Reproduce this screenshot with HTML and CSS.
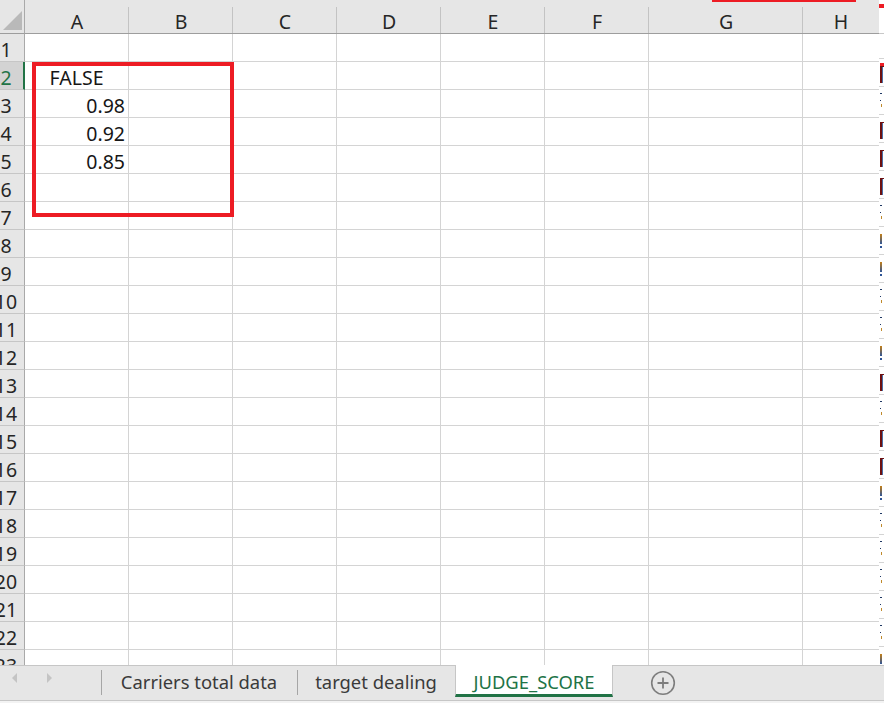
FILE: index.html
```html
<!DOCTYPE html>
<html>
<head>
<meta charset="utf-8">
<link rel="stylesheet" href="styles.css">
</head>
<body>
<div class="app">
  <div class="sheet">
    <div class="corner"><svg width="25" height="34" viewBox="0 0 25 34"><polygon points="22,11 22,30 3,30" fill="#b9b9b9"/></svg></div>
    <div class="ch">A</div><div class="ch">B</div><div class="ch">C</div><div class="ch">D</div><div class="ch">E</div><div class="ch">F</div><div class="ch">G</div><div class="ch">H</div><div class="ce"></div>

    <div class="rh"><span>1</span></div><div class="c"></div><div class="c"></div><div class="c"></div><div class="c"></div><div class="c"></div><div class="c"></div><div class="c"></div><div class="c"></div><div class="e"></div>
    <div class="rh act"><span>2</span></div><div class="c ctr">FALSE</div><div class="c"></div><div class="c"></div><div class="c"></div><div class="c"></div><div class="c"></div><div class="c"></div><div class="c"></div><div class="e"><i class="mk red top"></i></div>
    <div class="rh"><span>3</span></div><div class="c num">0.98</div><div class="c"></div><div class="c"></div><div class="c"></div><div class="c"></div><div class="c"></div><div class="c"></div><div class="c"></div><div class="e"><i class="mk a"></i></div>
    <div class="rh"><span>4</span></div><div class="c num">0.92</div><div class="c"></div><div class="c"></div><div class="c"></div><div class="c"></div><div class="c"></div><div class="c"></div><div class="c"></div><div class="e"><i class="mk red"></i></div>
    <div class="rh"><span>5</span></div><div class="c num">0.85</div><div class="c"></div><div class="c"></div><div class="c"></div><div class="c"></div><div class="c"></div><div class="c"></div><div class="c"></div><div class="e"><i class="mk red"></i></div>
    <div class="rh"><span>6</span></div><div class="c"></div><div class="c"></div><div class="c"></div><div class="c"></div><div class="c"></div><div class="c"></div><div class="c"></div><div class="c"></div><div class="e"><i class="mk red"></i></div>
    <div class="rh"><span>7</span></div><div class="c"></div><div class="c"></div><div class="c"></div><div class="c"></div><div class="c"></div><div class="c"></div><div class="c"></div><div class="c"></div><div class="e"><i class="mk a"></i></div>
    <div class="rh"><span>8</span></div><div class="c"></div><div class="c"></div><div class="c"></div><div class="c"></div><div class="c"></div><div class="c"></div><div class="c"></div><div class="c"></div><div class="e"><i class="mk ex"></i></div>
    <div class="rh"><span>9</span></div><div class="c"></div><div class="c"></div><div class="c"></div><div class="c"></div><div class="c"></div><div class="c"></div><div class="c"></div><div class="c"></div><div class="e"><i class="mk ex"></i></div>
    <div class="rh"><span>10</span></div><div class="c"></div><div class="c"></div><div class="c"></div><div class="c"></div><div class="c"></div><div class="c"></div><div class="c"></div><div class="c"></div><div class="e"><i class="mk a"></i></div>
    <div class="rh"><span>11</span></div><div class="c"></div><div class="c"></div><div class="c"></div><div class="c"></div><div class="c"></div><div class="c"></div><div class="c"></div><div class="c"></div><div class="e"><i class="mk a"></i></div>
    <div class="rh"><span>12</span></div><div class="c"></div><div class="c"></div><div class="c"></div><div class="c"></div><div class="c"></div><div class="c"></div><div class="c"></div><div class="c"></div><div class="e"><i class="mk ex"></i></div>
    <div class="rh"><span>13</span></div><div class="c"></div><div class="c"></div><div class="c"></div><div class="c"></div><div class="c"></div><div class="c"></div><div class="c"></div><div class="c"></div><div class="e"><i class="mk red"></i></div>
    <div class="rh"><span>14</span></div><div class="c"></div><div class="c"></div><div class="c"></div><div class="c"></div><div class="c"></div><div class="c"></div><div class="c"></div><div class="c"></div><div class="e"><i class="mk a"></i></div>
    <div class="rh"><span>15</span></div><div class="c"></div><div class="c"></div><div class="c"></div><div class="c"></div><div class="c"></div><div class="c"></div><div class="c"></div><div class="c"></div><div class="e"><i class="mk red"></i></div>
    <div class="rh"><span>16</span></div><div class="c"></div><div class="c"></div><div class="c"></div><div class="c"></div><div class="c"></div><div class="c"></div><div class="c"></div><div class="c"></div><div class="e"><i class="mk red"></i></div>
    <div class="rh"><span>17</span></div><div class="c"></div><div class="c"></div><div class="c"></div><div class="c"></div><div class="c"></div><div class="c"></div><div class="c"></div><div class="c"></div><div class="e"><i class="mk ex"></i></div>
    <div class="rh"><span>18</span></div><div class="c"></div><div class="c"></div><div class="c"></div><div class="c"></div><div class="c"></div><div class="c"></div><div class="c"></div><div class="c"></div><div class="e"><i class="mk a"></i></div>
    <div class="rh"><span>19</span></div><div class="c"></div><div class="c"></div><div class="c"></div><div class="c"></div><div class="c"></div><div class="c"></div><div class="c"></div><div class="c"></div><div class="e"><i class="mk a"></i></div>
    <div class="rh"><span>20</span></div><div class="c"></div><div class="c"></div><div class="c"></div><div class="c"></div><div class="c"></div><div class="c"></div><div class="c"></div><div class="c"></div><div class="e"><i class="mk a"></i></div>
    <div class="rh"><span>21</span></div><div class="c"></div><div class="c"></div><div class="c"></div><div class="c"></div><div class="c"></div><div class="c"></div><div class="c"></div><div class="c"></div><div class="e"><i class="mk a"></i></div>
    <div class="rh"><span>22</span></div><div class="c"></div><div class="c"></div><div class="c"></div><div class="c"></div><div class="c"></div><div class="c"></div><div class="c"></div><div class="c"></div><div class="e"><i class="mk a"></i></div>
    <div class="rh"><span>23</span></div><div class="c"></div><div class="c"></div><div class="c"></div><div class="c"></div><div class="c"></div><div class="c"></div><div class="c"></div><div class="c"></div><div class="e"><i class="mk ex"></i></div>
  </div>

  <div class="redbox"></div>
  <div class="redline"></div>
  <div class="redtick"></div>

  <div class="tabs">
    <div class="nav">
      <svg width="101" height="35" viewBox="0 0 101 35"><polygon points="17,8 17,18 12,13" fill="#c4c4c4"/><polygon points="47,8 47,18 52,13" fill="#c4c4c4"/></svg>
    </div>
    <div class="tab t1">Carriers total data</div>
    <div class="tab t2">target dealing</div>
    <div class="tab active">JUDGE_SCORE</div>
    <div class="add">
      <svg width="26" height="26" viewBox="0 0 26 26"><circle cx="13" cy="13" r="11.3" fill="none" stroke="#7d7d7d" stroke-width="1.6"/><path d="M13 7.5V18.5M7.5 13H18.5" stroke="#7d7d7d" stroke-width="1.8"/></svg>
    </div>
  </div>
  <div class="foot"></div>
</div>
</body>
</html>
```

FILE: styles.css
```css
html, body {
  margin: 0;
  padding: 0;
}
body {
  width: 884px;
  height: 703px;
  overflow: hidden;
  background: #ffffff;
  font-family: "Noto Sans", "Liberation Sans", sans-serif;
  font-size: 19.5px;
  color: #1e1e1e;
}
.app {
  position: relative;
  width: 884px;
  height: 703px;
  overflow: hidden;
}
.sheet {
  display: grid;
  grid-template-columns: 25px repeat(6, 104px) 154px 76px 5px;
  grid-template-rows: 34px repeat(23, 28px);
  height: 665px;
  overflow: hidden;
}
.sheet > div {
  box-sizing: border-box;
  overflow: hidden;
  white-space: nowrap;
}
.corner {
  background: #e6e6e6;
  border-right: 1px solid #a9a9a9;
  border-bottom: 1px solid #9d9d9d;
}
.corner svg {
  display: block;
}
.ch {
  position: relative;
  background: #e6e6e6;
  border-bottom: 1px solid #9d9d9d;
  text-align: center;
  line-height: 25px;
  padding-top: 9px;
  color: #262626;
}
.ch::after {
  content: "";
  position: absolute;
  right: 0;
  top: 7px;
  bottom: 0;
  width: 1px;
  background: #c3c3c3;
}
.ch:nth-child(9)::after {
  display: none;
}
.ce {
  background: #ffffff;
  border-bottom: 1px solid #c8c8c8;
}
.rh {
  background: #e6e6e6;
  border-right: 1px solid #a9a9a9;
  border-bottom: 1px solid #c6c6c6;
  line-height: 25px;
  padding-top: 3px;
  color: #262626;
}
.rh span {
  display: block;
  width: 40px;
  margin-left: -14px;
  text-align: center;
}
.rh.act {
  background: #d3d3d3;
  color: #217346;
  border-right: 2px solid #217346;
}
.c {
  border-right: 1px solid #d4d4d4;
  border-bottom: 1px solid #d4d4d4;
  line-height: 25px;
  padding: 3px 3px 0 3px;
  color: #161616;
}
.c:nth-child(10n+9) {
  border-right: none;
}
.ctr {
  text-align: center;
}
.num {
  text-align: right;
}
.e {
  position: relative;
  background: linear-gradient(#d4d4d4, #d4d4d4) 0 24px / 100% 1px no-repeat;
}
.mk {
  position: absolute;
  left: 1px;
  display: block;
}
.mk.red {
  top: 4px;
  width: 3px;
  height: 16px;
  border-left: 2px solid #6e1010;
  border-top: 1px solid #6e1010;
  box-shadow: inset 1px 0 #4a6fa5;
}
.mk.red.top::before {
  content: "";
  position: absolute;
  left: -2px;
  top: -4px;
  width: 5px;
  height: 3px;
  background: #ed1c24;
}
.mk.a {
  top: 3px;
  height: 14px;
  width: 3px;
  background:
    linear-gradient(#1f3864, #1f3864) 0 0 / 2px 1px no-repeat,
    linear-gradient(#1f3864, #1f3864) 0 7px / 1px 1px no-repeat,
    linear-gradient(#c08a2c, #c08a2c) 1px 11px / 1px 3px no-repeat;
}
.mk.ex {
  top: 4px;
  width: 2px;
  height: 14px;
  background:
    linear-gradient(#c47f17, #2f5597) 0 0 / 2px 10px no-repeat,
    linear-gradient(#2f5597, #2f5597) 0 12px / 2px 2px no-repeat;
}
.redbox {
  position: absolute;
  left: 32px;
  top: 62px;
  width: 202px;
  height: 155px;
  box-sizing: border-box;
  border: 4px solid #ed1c24;
}
.redline {
  position: absolute;
  left: 712px;
  top: 0;
  width: 144px;
  height: 2px;
  background: #ed1c24;
}
.redtick {
  position: absolute;
  left: 879px;
  top: 4px;
  width: 5px;
  height: 4px;
  background: #ed1c24;
}
.tabs {
  display: flex;
  align-items: flex-start;
  height: 35px;
  background: #e6e6e6;
  box-shadow: inset 0 1px #c6c6c6;
  border-bottom: 1px solid #c6c6c6;
  color: #3a3a3a;
  font-size: 18.4px;
}
.nav {
  width: 101px;
  height: 35px;
}
.nav svg {
  display: block;
}
.tab {
  position: relative;
  box-sizing: border-box;
  height: 35px;
  text-align: center;
  line-height: 25px;
  padding-top: 3.5px;
  white-space: nowrap;
}
.t1 {
  width: 196px;
}
.t2 {
  width: 158px;
}
.t1::before, .t2::before {
  content: "";
  position: absolute;
  left: 0;
  top: 5px;
  height: 25px;
  width: 1px;
  background: #a6a6a6;
}
.active {
  width: 158px;
  height: 32px;
  background: #ffffff;
  color: #217346;
  border-left: 1px solid #c6c6c6;
  border-right: 1px solid #c6c6c6;
  border-bottom: 3px solid #217346;
}
.add {
  padding: 5px 0 0 37px;
}
.add svg {
  display: block;
}
.foot {
  height: 2px;
  background: #f3f3f3;
}
```
